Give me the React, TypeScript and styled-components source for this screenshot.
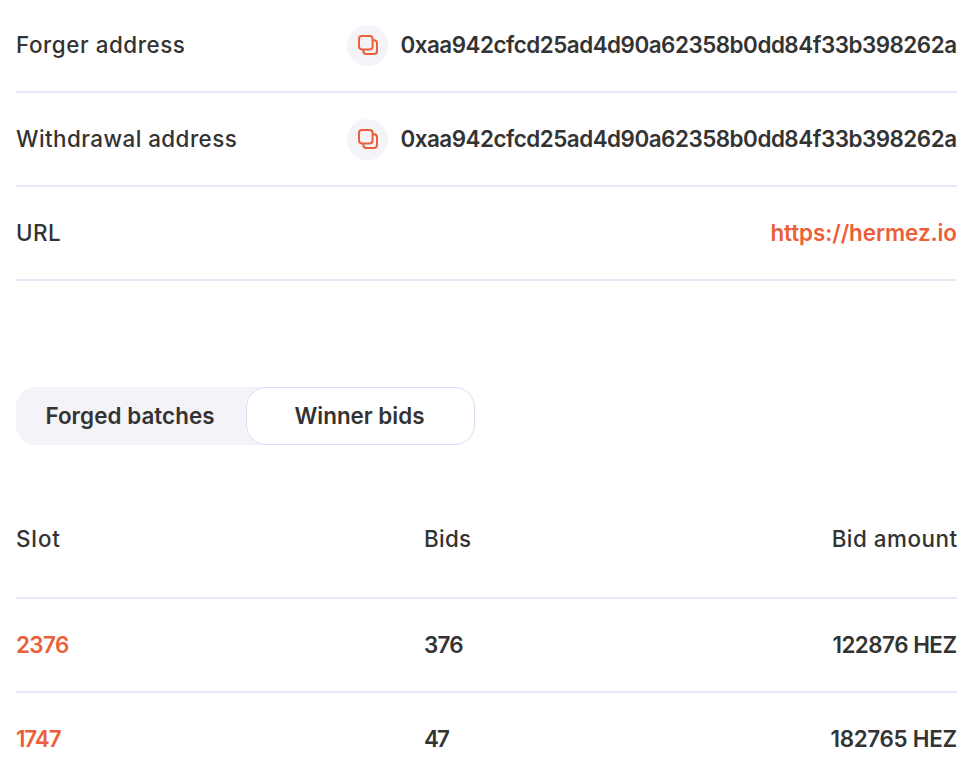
import React from "react";
import styled, { createGlobalStyle } from "styled-components";

const GlobalStyle = createGlobalStyle`
  * { box-sizing: border-box; }
  body { margin: 0; background: #fff; overflow: hidden; }
`;

const Page = styled.main`
  height: 780px;
  padding: 0 14px 0 16px;
  overflow: hidden;
  background: #fff;
  color: #333;
  font-family: Inter, "Liberation Sans", sans-serif;
  font-size: 22.4px;
  line-height: 28px;
`;

const Details = styled.section`
  display: flex;
  flex-direction: column;
  margin-right: 1px;
`;

const DetailRow = styled.div`
  display: flex;
  align-items: center;
  justify-content: space-between;
  height: 94px;
  border-bottom: 2px solid #e8e7f6;
  &:first-child { height: 93px; padding-bottom: 1px; }
`;

const Text = styled.span<{ $tracking?: number; $strong?: boolean }>`
  white-space: nowrap;
  font-weight: ${(p) => (p.$strong ? 600 : 450)};
  letter-spacing: ${(p) => p.$tracking ?? 0}px;
  margin-right: ${(p) => -(p.$tracking ?? 0)}px;
`;

const Link = styled(Text).attrs({ as: "a" })`
  color: #eb5f39;
  cursor: pointer;
`;

const Address = styled.div`
  display: flex;
  align-items: center;
  gap: 12px;
`;

const CopyButton = styled.button`
  display: grid;
  place-items: center;
  width: 41px;
  height: 41px;
  padding: 0;
  border: 0;
  border-radius: 50%;
  background: #f3f3f8;
`;

const Tabs = styled.div`
  display: flex;
  width: 459px;
  height: 58px;
  margin-top: 106px;
  border-radius: 20px;
  background: #f3f3f8;
`;

const Tab = styled.button<{ $active?: boolean }>`
  display: flex;
  align-items: center;
  justify-content: center;
  width: ${(p) => (p.$active ? 229 : 230)}px;
  padding: 0 2px 0 0;
  border: ${(p) => (p.$active ? "1px solid #dfdcf3" : "0")};
  border-radius: 20px;
  background: ${(p) => (p.$active ? "#fff" : "transparent")};
  color: inherit;
  font: inherit;
`;

const Table = styled.section`
  margin: 36px 1px 0 0;
`;

const TableRow = styled.div<{ $head?: boolean }>`
  display: grid;
  grid-template-columns: 408px 1fr auto;
  align-items: center;
  height: ${(p) => (p.$head ? 118 : 94)}px;
  border-bottom: 2px solid #e8e7f6;
`;

const CopyIcon = () => (
  <svg width="20" height="20" viewBox="0 0 20 20" fill="none" stroke="#eb5f39" strokeWidth="2" strokeLinejoin="round">
    <rect x="1" y="1" width="13.6" height="13.4" rx="2.8" />
    <path d="M14.6 5.2h1.3A3.1 3.1 0 0 1 19 8.3v7.6A3.1 3.1 0 0 1 15.9 19H8.4a3.1 3.1 0 0 1-3.1-3.1v-1.5" />
  </svg>
);

const address = "0xaa942cfcd25ad4d90a62358b0dd84f33b398262a";

const addressRows = [
  { label: "Forger address", tracking: 0.55 },
  { label: "Withdrawal address", tracking: 0.45 },
];

const bids = [
  { slot: "2376", slotTracking: -0.6, bids: "376", bidsTracking: -0.8, amount: "122876 HEZ", amountTracking: -0.5 },
  { slot: "1747", slotTracking: -1.1, bids: "47", bidsTracking: -2, amount: "182765 HEZ", amountTracking: -0.3 },
];

export default function App() {
  return (
    <Page>
      <GlobalStyle />
      <Details>
        {addressRows.map((row) => (
          <DetailRow key={row.label}>
            <Text $tracking={row.tracking}>{row.label}</Text>
            <Address>
              <CopyButton aria-label={`Copy ${row.label}`}>
                <CopyIcon />
              </CopyButton>
              <Text $strong $tracking={-0.48}>{address}</Text>
            </Address>
          </DetailRow>
        ))}
        <DetailRow>
          <Text $tracking={0.4}>URL</Text>
          <Link $strong $tracking={-0.06}>https://hermez.io</Link>
        </DetailRow>
      </Details>
      <Tabs role="tablist">
        <Tab role="tab"><Text $strong $tracking={0.06}>Forged batches</Text></Tab>
        <Tab role="tab" $active><Text $strong>Winner bids</Text></Tab>
      </Tabs>
      <Table>
        <TableRow $head>
          <Text $tracking={0.9}>Slot</Text>
          <Text $tracking={0.3}>Bids</Text>
          <Text $tracking={0.5}>Bid amount</Text>
        </TableRow>
        {bids.map((row) => (
          <TableRow key={row.slot}>
            <Link $strong $tracking={row.slotTracking}>{row.slot}</Link>
            <Text $strong $tracking={row.bidsTracking}>{row.bids}</Text>
            <Text $strong $tracking={row.amountTracking}>{row.amount}</Text>
          </TableRow>
        ))}
      </Table>
    </Page>
  );
}
